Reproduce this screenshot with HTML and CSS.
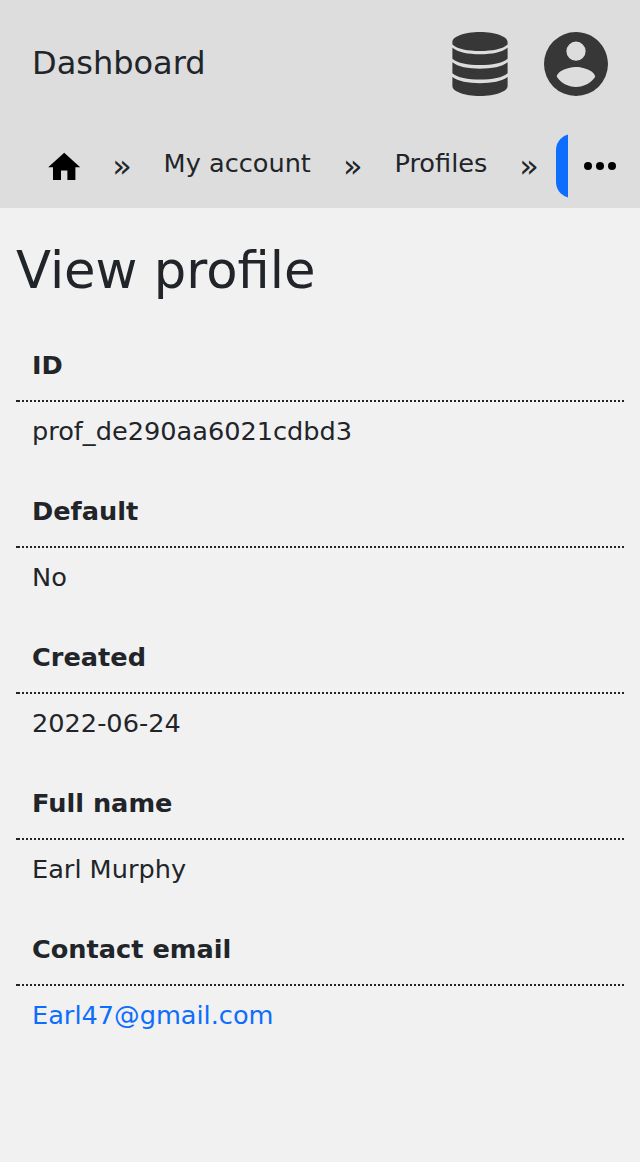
FILE: index.html
```html
<!DOCTYPE html>
<html lang="en">
<head>
<meta charset="utf-8">
<title>View profile</title>
<link rel="stylesheet" href="styles.css">
</head>
<body>
<header class="header">
  <div class="topbar">
    <span class="brand">Dashboard</span>
    <svg class="database" viewBox="0 0 56 64" aria-label="Database"><path d="M.4 10C.4 4.500 12.500 0 28 0S55.600 4.500 55.600 10V12.500C51 17 40 19 28 19S5 17 .4 12.500ZM.4 15.800C6 20.300 16 22.300 28 22.300S50 20.300 55.600 15.800V26.700C51 31 40 33 28 33S5 31 .4 26.700ZM.4 30.300C6 34.800 16 36.700 28 36.700S50 34.800 55.600 30.300V41.200C51 45.500 40 47.500 28 47.500S5 45.500 .4 41.200ZM.4 45C6 49.300 16 51.200 28 51.200S50 49.300 55.600 45V54C55.600 59.500 43.500 64 28 64S.4 59.500 .4 54Z"/></svg>
    <svg class="account" viewBox="2 2 20 20" aria-label="Account"><path d="M12,19.2C9.5,19.2 7.29,17.92 6,16C6.03,14 10,12.9 12,12.9C14,12.9 17.97,14 18,16C16.71,17.92 14.5,19.2 12,19.2M12,5A3,3 0 0,1 15,8A3,3 0 0,1 12,11A3,3 0 0,1 9,8A3,3 0 0,1 12,5M12,2A10,10 0 0,0 2,12A10,10 0 0,0 12,22A10,10 0 0,0 22,12C22,6.47 17.5,2 12,2Z"/></svg>
  </div>
  <nav class="nav">
    <div class="crumbs">
      <svg class="home" viewBox="0 0 24 24" aria-label="Home"><path d="M10,20V14H14V20H19V12H22L12,3L2,12H5V20H10Z"/></svg>
      <span class="sep first">»</span>
      <span class="crumb">My account</span>
      <span class="sep">»</span>
      <span class="crumb">Profiles</span>
      <span class="sep last">»</span>
      <span class="current"></span>
    </div>
    <svg class="more" viewBox="0 0 24 24" aria-label="More"><circle cx="6" cy="12" r="2"/><circle cx="12" cy="12" r="2"/><circle cx="18" cy="12" r="2"/></svg>
  </nav>
</header>
<main class="main">
  <h1 class="title">View profile</h1>
  <dl class="details">
    <dt class="label">ID</dt><dd class="value">prof_de290aa6021cdbd3</dd>
    <dt class="label">Default</dt><dd class="value">No</dd>
    <dt class="label">Created</dt><dd class="value">2022-06-24</dd>
    <dt class="label">Full name</dt><dd class="value">Earl Murphy</dd>
    <dt class="label">Contact email</dt><dd class="value"><a class="link" href="mailto:Earl47@gmail.com">Earl47@gmail.com</a></dd>
  </dl>
</main>
</body>
</html>
```

FILE: styles.css
```css
* { box-sizing: border-box; }
body {
  margin: 0;
  min-height: 1162px;
  background: #f1f1f1;
  color: #212529;
  font: 25.6px/38px "DejaVu Sans", sans-serif;
}
.header { height: 208px; background: #ddd; }
.topbar {
  display: flex;
  align-items: center;
  height: 128px;
  padding: 0 32px;
}
.brand { flex: 1; font-size: 32px; line-height: 48px; padding-bottom: 2px; }
.database { width: 56px; height: 64px; margin-right: 36px; fill: #373737; }
.account { width: 64px; height: 64px; fill: #373737; }
.nav { display: flex; height: 80px; padding: 0 16px; }
.crumbs {
  display: flex;
  width: 552px;
  padding-left: 28.8px;
  overflow: hidden;
  white-space: nowrap;
}
.home { flex: none; width: 38.4px; height: 38.4px; margin-top: 19.700px; }
.crumb { flex: none; padding-top: 16px; }
.sep { flex: none; width: 83.500px; padding: 19px 0 0 32px; font-size: 32px; }
.sep.first { width: 80.400px; padding-left: 29px; }
.sep.last { width: 68.500px; }
.current {
  flex: none;
  width: 200px;
  height: 64px;
  margin-top: 6px;
  border-radius: 16px;
  background: #0d6efd;
}
.more { flex: none; width: 48px; height: 48px; margin: 14px 0 0 8px; }
.main { padding: 32px 16px; }
.title { margin: 0 0 32px; font-size: 51.2px; font-weight: 400; line-height: 61px; }
.details { margin: 0; }
.label {
  height: 69px;
  padding: 13px 16px 0;
  background:
    linear-gradient(#212529, #212529) 0 100% / 2px 2px no-repeat,
    linear-gradient(90deg, transparent 50%, #212529 50%) 0 100% / 4px 2px repeat-x;
  font-weight: 700;
}
.value { height: 77px; margin: 0; padding: 10px 16px 0; }
.link { color: #0d6efd; text-decoration: none; }
```
